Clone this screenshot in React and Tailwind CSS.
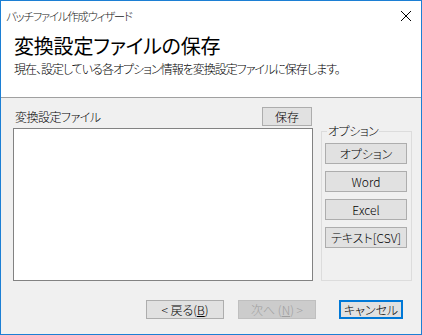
import React from "react";

const font = "font-['Noto_Sans_CJK_JP','Noto_Sans',sans-serif]";
const palt = "[font-feature-settings:'palt']";

function Btn({ children, className = "" }) {
  return (
    <div
      className={`flex items-center justify-center border border-[#adadad] bg-[#e1e1e1] text-[12px] leading-[14px] text-black font-light ${palt} ${className}`}
    >
      {children}
    </div>
  );
}

export default function App() {
  return (
    <div className={`w-[422px] h-[335px] border border-[#1c7fd4] bg-[#f0f0f0] flex flex-col ${font}`}>
      {/* title bar */}
      <div className="h-[29px] shrink-0 bg-white flex items-center justify-between pl-[5px] pr-[9px]">
        <span className={`text-[11.5px] leading-[16px] tracking-[-1.3px] text-[#222] font-light ${palt}`}>バッチファイル作成ウィザード</span>
        <svg width="12" height="12" viewBox="0 0 12 12" className="block">
          <path d="M1 1 L11 11 M11 1 L1 11" stroke="#000" strokeWidth="1" fill="none" />
        </svg>
      </div>
      {/* header */}
      <div className="h-[68px] shrink-0 bg-white border-b border-[#a0a0a0] pl-[13px] pt-[3px]">
        <div className={`text-[20px] leading-[26px] tracking-[-0.2px] text-black ${palt}`}>変換設定ファイルの保存</div>
        <div className={`mt-[2px] text-[12px] leading-[16px] tracking-[-1px] text-black font-light ${palt}`}>
          現在、設定している各オプション情報を変換設定ファイルに保存します。
        </div>
      </div>
      {/* body */}
      <div className="flex pl-[12px] pt-[9px]">
        <div className="w-[300px] flex flex-col">
          <div className="h-[19px] flex items-center justify-between">
            <span className={`pl-[2px] text-[12px] leading-[16px] tracking-[-0.5px] text-black font-light ${palt}`}>変換設定ファイル</span>
            <Btn className="w-[50px] h-[19px] mr-[1px]">保存</Btn>
          </div>
          <div className="mt-[2px] h-[153px] border border-[#828282] bg-white" />
        </div>
        <div className="ml-[8px] mt-[24px] w-[91px] h-[150px] relative border border-[#dcdcdc] pt-[11px] pl-[3px] flex flex-col gap-[7px]">
          <span className={`absolute top-[-9px] left-[5px] px-[1px] bg-[#f0f0f0] text-[12px] leading-[16px] tracking-[-0.5px] text-black font-light ${palt}`}>
            オプション
          </span>
          <Btn className="w-[82px] h-[21px]">オプション</Btn>
          <Btn className="w-[82px] h-[21px]">Word</Btn>
          <Btn className="w-[82px] h-[21px]">Excel</Btn>
          <Btn className="w-[82px] h-[21px]">テキスト[CSV]</Btn>
        </div>
      </div>
      {/* footer */}
      <div className="flex justify-end items-start pr-[18px] mt-[19px]">
        <Btn className="w-[78px] h-[19px]">
          &lt; 戻る(<span className="underline">B</span>)
        </Btn>
        <div
          className={`ml-[14px] w-[78px] h-[19px] flex items-center justify-center border border-[#bfbfbf] bg-[#cccccc] text-[12px] leading-[14px] text-[#a0a0a0] font-light ${palt}`}
        >
          次へ (<span className="underline">N</span>) &gt;
        </div>
        <div
          className={`ml-[23px] w-[64px] h-[19px] flex items-center justify-center border-2 border-[#0078d7] bg-[#e1e1e1] text-[12px] leading-[14px] text-black font-light ${palt}`}
        >
          キャンセル
        </div>
      </div>
    </div>
  );
}
